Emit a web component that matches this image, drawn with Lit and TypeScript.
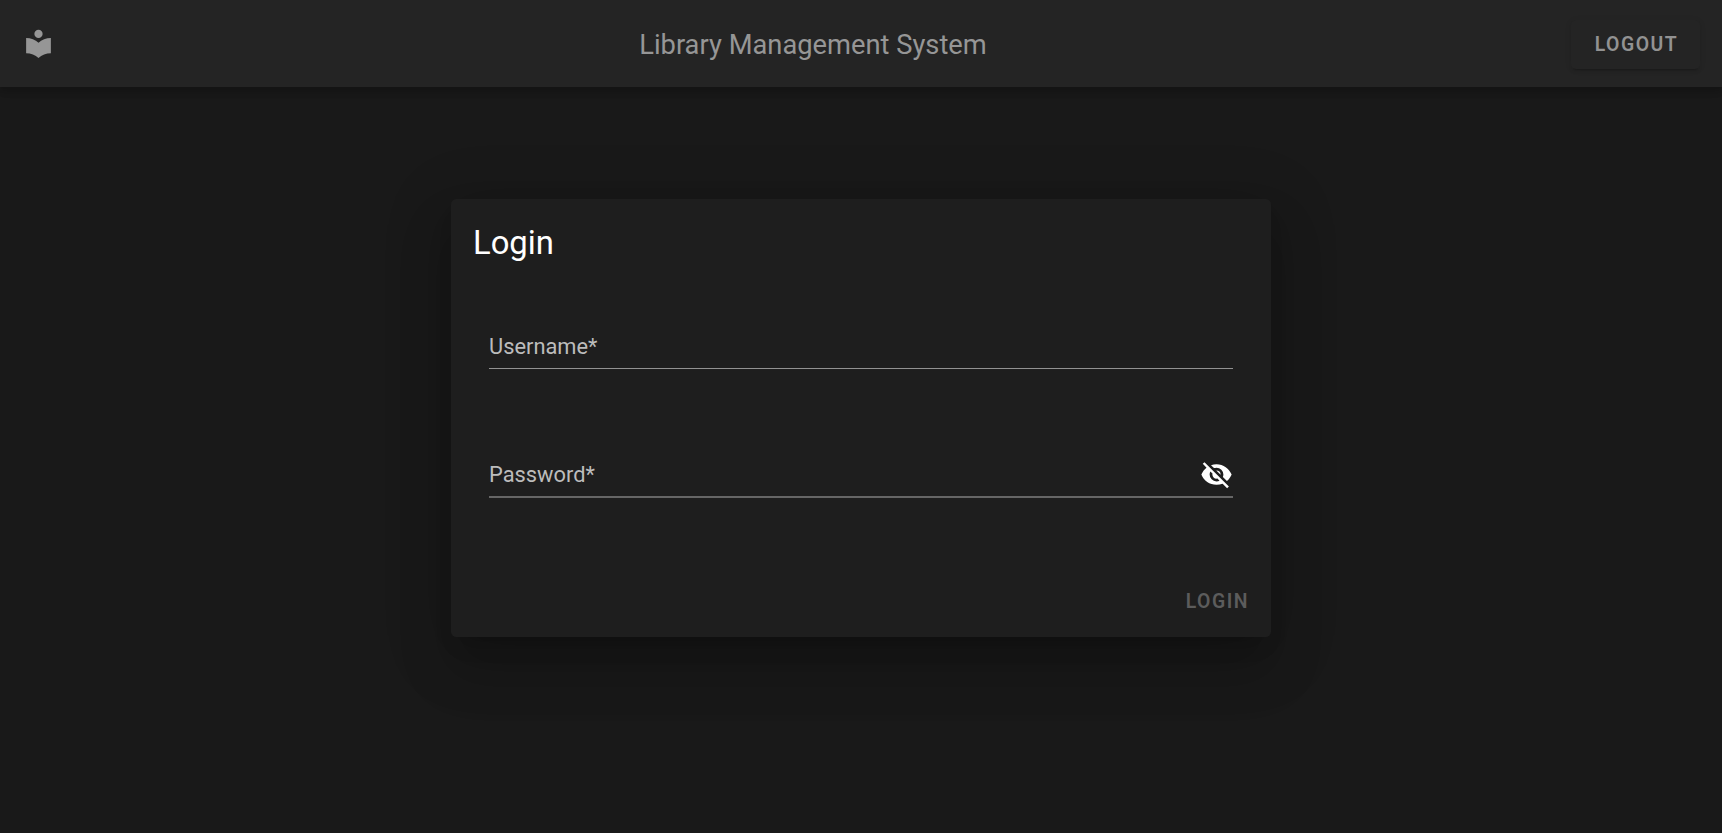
import { LitElement, html, css } from "lit";
import { customElement } from "lit/decorators.js";

@customElement("app-root")
export class AppRoot extends LitElement {
  static styles = css`
    :host {
      display: flex;
      flex-direction: column;
      height: 100vh;
      overflow: hidden;
      background: #191919;
      color: #fff;
      font-family: Roboto, sans-serif;
    }
    * { box-sizing: border-box; }
    button {
      border: 0;
      background: none;
      padding: 0;
      font: 600 19.4px/1 Roboto, sans-serif;
      letter-spacing: 1.5px;
      text-transform: uppercase;
    }
    .bar {
      flex: none;
      height: 87px;
      padding: 0 22px;
      display: flex;
      align-items: center;
      justify-content: space-between;
      background: #242424;
      color: #969696;
      box-shadow: 0 3px 5px -1px rgba(0,0,0,.11), 0 5px 7px rgba(0,0,0,.08), 0 1px 14px rgba(0,0,0,.06);
    }
    .book { width: 33px; height: 33px; fill: currentColor; }
    .name { font-size: 27.3px; line-height: 40px; margin: 2px 0 0 0; }
    .logout {
      width: 129px;
      height: 49px;
      color: #929292;
      border-radius: 5px;
      margin-top: 1px;
      padding: 2px 0 0 2px;
      background: #242424;
      box-shadow: 0 4px 1px -3px rgba(0,0,0,.11), 0 3px 3px rgba(0,0,0,.08), 0 1px 7px rgba(0,0,0,.07);
    }
    .main { flex: 1; display: flex; justify-content: center; align-items: flex-start; padding-top: 112px; }
    .card {
      width: 820px;
      height: 437.5px;
      padding: 21.5px 22px;
      display: flex;
      flex-direction: column;
      border-radius: 5.5px;
      background: #1e1e1e;
      box-shadow: 0 15px 20px -10px rgba(0,0,0,.2), 0 33px 52px 4px rgba(0,0,0,.14), 0 12px 63px 11px rgba(0,0,0,.12);
    }
    .card h1 { margin: 0; font-weight: 400; font-size: 32.8px; line-height: 44px; }
    .fields { padding: 60.5px 16px 0; display: grid; gap: 85px; }
    .field {
      height: 44px;
      display: flex;
      align-items: center;
      justify-content: space-between;
      font-size: 21.85px;
      color: #bcbcbc;
      border-bottom: 1px solid #929292;
    }
    .field.thick { border-bottom: 2px solid #666; padding-bottom: 1px; }
    .eye { width: 33px; height: 33px; fill: #fff; }
    .actions { margin-top: auto; display: flex; justify-content: flex-end; }
    .login { height: 27px; color: #5c5c5c; }
  `;

  render() {
    return html`
      <header class="bar">
        <svg class="book" viewBox="0 0 24 24"><path d="M12 8a3 3 0 0 0 3-3 3 3 0 0 0-3-3 3 3 0 0 0-3 3 3 3 0 0 0 3 3m0 3.54C9.64 9.35 6.5 8 3 8v11c3.5 0 6.64 1.35 9 3.54 2.36-2.19 5.5-3.54 9-3.54V8c-3.5 0-6.64 1.35-9 3.54Z"/></svg>
        <div class="name">Library Management System</div>
        <button class="logout">Logout</button>
      </header>
      <main class="main">
        <form class="card">
          <h1>Login</h1>
          <div class="fields">
            <div class="field"><label>Username*</label></div>
            <div class="field thick">
              <label>Password*</label>
              <svg class="eye" viewBox="0 0 24 24"><path d="M11.83 9 15 12.16V12a3 3 0 0 0-3-3h-.17m-4.3.8 1.55 1.55c-.05.21-.08.42-.08.65a3 3 0 0 0 3 3c.22 0 .44-.03.65-.08l1.55 1.55c-.67.33-1.41.53-2.2.53a5 5 0 0 1-5-5c0-.79.2-1.53.53-2.2M2 4.27l2.28 2.28.45.45C3.08 8.3 1.78 10 1 12c1.73 4.39 6 7.5 11 7.5 1.55 0 3.03-.3 4.38-.84l.43.42L19.73 22 21 20.73 3.27 3M12 7a5 5 0 0 1 5 5c0 .64-.13 1.26-.36 1.82l2.93 2.93c1.5-1.25 2.7-2.89 3.43-4.75-1.73-4.39-6-7.5-11-7.5-1.4 0-2.74.25-4 .7l2.17 2.15C10.74 7.13 11.35 7 12 7Z"/></svg>
            </div>
          </div>
          <div class="actions"><button class="login" type="button">Login</button></div>
        </form>
      </main>
    `;
  }
}
